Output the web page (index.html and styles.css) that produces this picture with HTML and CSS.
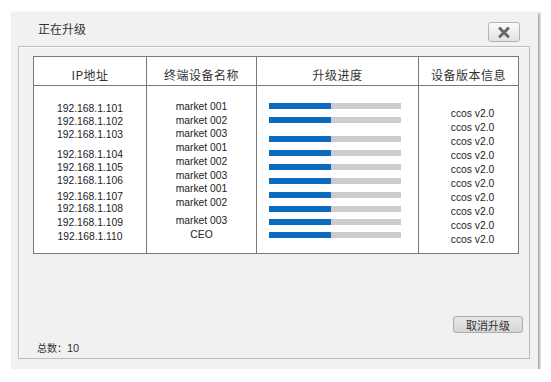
FILE: index.html
```html
<!DOCTYPE html>
<html>
<head lang="zh">
  <meta charset="UTF-8">
  <title>正在升级</title>
  <link rel="stylesheet" href="styles.css">
</head>
<body>
  <div class="dialog">
    <div class="dialog-head">
      <span class="title">正在升级</span>
      <button class="close">
        <svg width="12" height="11" viewBox="0 0 12 11"><path d="M2 1.5 L10 9.5 M10 1.5 L2 9.5" stroke="#666" stroke-width="3" stroke-linecap="round"/></svg>
      </button>
    </div>
    <div class="panel">
      <div class="table">
        <div class="th">IP地址</div>
        <div class="th">终端设备名称</div>
        <div class="th">升级进度</div>
        <div class="th last">设备版本信息</div>

        <div class="td ip">
          <p>192.168.1.101</p>
          <p>192.168.1.102</p>
          <p>192.168.1.103</p>
          <p class="m7">192.168.1.104</p>
          <p>192.168.1.105</p>
          <p>192.168.1.106</p>
          <p class="m3">192.168.1.107</p>
          <p class="mn1">192.168.1.108</p>
          <p class="m1">192.168.1.109</p>
          <p class="m1">192.168.1.110</p>
        </div>
        <div class="td name">
          <p>market 001</p>
          <p>market 002</p>
          <p>market 003</p>
          <p>market 001</p>
          <p>market 002</p>
          <p>market 003</p>
          <p>market 001</p>
          <p>market 002</p>
          <p class="m4">market 003</p>
          <p class="m1">CEO</p>
        </div>
        <div class="td progress">
          <div class="row"><div class="bar"><i style="width:47%"></i></div></div>
          <div class="row"><div class="bar"><i style="width:47%"></i></div></div>
          <div class="row m5"><div class="bar"><i style="width:47%"></i></div></div>
          <div class="row"><div class="bar"><i style="width:47%"></i></div></div>
          <div class="row"><div class="bar"><i style="width:47%"></i></div></div>
          <div class="row"><div class="bar"><i style="width:47%"></i></div></div>
          <div class="row"><div class="bar"><i style="width:47%"></i></div></div>
          <div class="row short"><div class="bar"><i style="width:47%"></i></div></div>
          <div class="row short"><div class="bar"><i style="width:47%"></i></div></div>
          <div class="row"><div class="bar"><i style="width:47%"></i></div></div>
        </div>
        <div class="td ver last">
          <p>ccos v2.0</p>
          <p>ccos v2.0</p>
          <p>ccos v2.0</p>
          <p>ccos v2.0</p>
          <p>ccos v2.0</p>
          <p>ccos v2.0</p>
          <p>ccos v2.0</p>
          <p>ccos v2.0</p>
          <p>ccos v2.0</p>
          <p>ccos v2.0</p>
        </div>
      </div>
      <div class="actions">
        <button class="btn">取消升级</button>
      </div>
      <div class="count">总数：<b>10</b></div>
    </div>
  </div>
</body>
</html>
```

FILE: styles.css
```css
* {
  margin: 0;
  padding: 0;
  box-sizing: border-box;
}
body {
  background: #fff;
  font-family: "Liberation Sans", Arial, "Noto Sans CJK SC", sans-serif;
  font-size: 10.3px;
  color: #222;
}
.dialog {
  margin: 11px 0 0 11px;
  width: 527px;
  height: 358px;
  background: #f1f1f1;
  border-top: 1px solid #f6f6f6;
  box-shadow: 2px 2px 2px #a8a8a8;
  display: flex;
  flex-direction: column;
}
.dialog-head {
  height: 34px;
  display: flex;
  align-items: flex-start;
  justify-content: space-between;
  padding: 8px 18px 0 27px;
}
.title {
  font-family: "Noto Sans CJK SC", sans-serif;
  font-size: 12px;
  color: #333;
}
.close {
  margin-top: 2px;
  width: 32px;
  height: 20px;
  border: 1px solid #b4b4b4;
  border-radius: 3px;
  background: linear-gradient(#fbfbfb, #e2e2e2);
  display: flex;
  align-items: center;
  justify-content: center;
}
.panel {
  margin: 0 8px 0 7px;
  height: 313px;
  border: 1px solid #bdbdbd;
  box-shadow: inset 1px 1px 0 #fafafa;
  padding: 9px 13px 0 14px;
  display: flex;
  flex-direction: column;
}
.table {
  width: 486px;
  height: 198px;
  background: #fff;
  border: 1px solid #7a7a7a;
  display: grid;
  grid-template-columns: 113px 110px 162px 99px;
  grid-template-rows: 29px 1fr;
}
.th {
  font-family: "Noto Sans CJK SC", sans-serif;
  font-size: 12px;
  letter-spacing: 0.5px;
  color: #333;
  text-align: center;
  padding-top: 9px;
  border-right: 1px solid #7a7a7a;
  border-bottom: 1px solid #7a7a7a;
}
.td {
  border-right: 1px solid #7a7a7a;
  text-align: center;
}
.last {
  border-right: none;
}
.ip {
  padding-top: 16px;
  line-height: 13px;
}
.name {
  padding-top: 14px;
  line-height: 13.7px;
}
.ver {
  padding-top: 21px;
  line-height: 14px;
  padding-left: 8px;
}
.m1 { margin-top: 1px; }
.m3 { margin-top: 3px; }
.m4 { margin-top: 4px; }
.m5 { margin-top: 5px; }
.m7 { margin-top: 7px; }
.mn1 { margin-top: -1px; }
.progress {
  padding: 13px 0 0 12px;
}
.row {
  height: 14px;
  display: flex;
  align-items: center;
}
.row.short {
  height: 13px;
}
.bar {
  width: 132px;
  height: 6px;
  background: #cccccc;
}
.bar i {
  display: block;
  height: 100%;
  background: #0b6bbd;
}
.actions {
  display: flex;
  justify-content: flex-end;
  margin-top: 62px;
}
.btn {
  width: 70px;
  height: 17px;
  border: 1px solid #adadad;
  border-radius: 3px;
  background: linear-gradient(#e6e6e6, #d6d6d6);
  font-family: "Noto Sans CJK SC", sans-serif;
  font-size: 11px;
  color: #333;
  margin-right: -7px;
  line-height: 14px;
}
.count {
  margin-top: 7px;
  padding-left: 4px;
  font-family: "Noto Sans CJK SC", sans-serif;
  font-size: 10px;
  color: #333;
}
.count b {
  font-family: "Liberation Sans", sans-serif;
  font-weight: normal;
  font-size: 11px;
}
```
